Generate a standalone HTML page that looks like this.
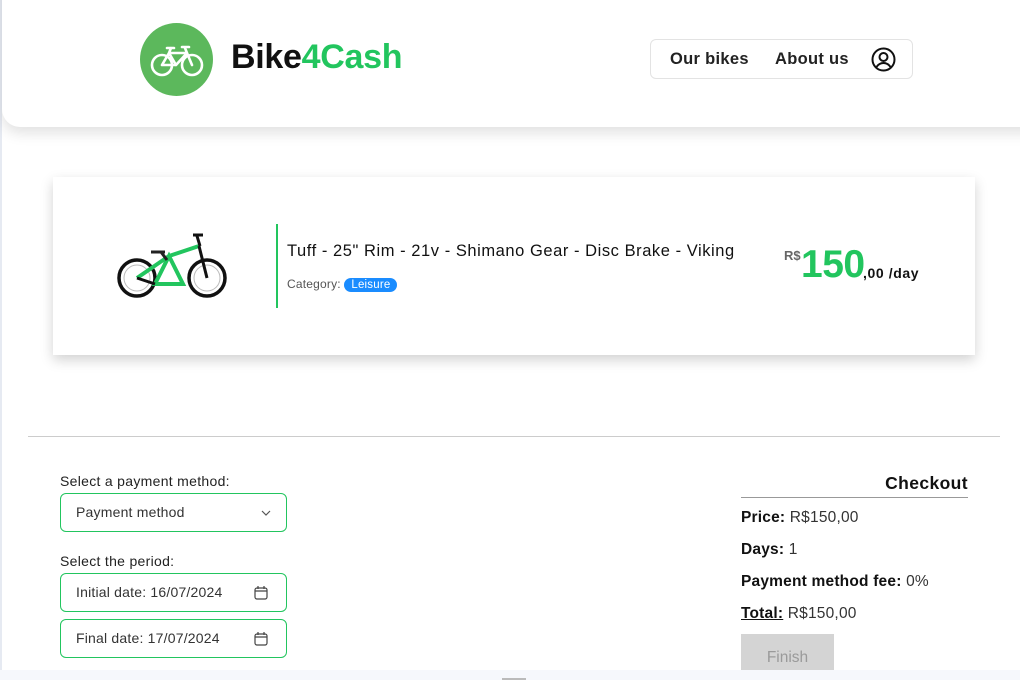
<!DOCTYPE html>
<html><head><meta charset="utf-8"><style>
*{box-sizing:border-box;margin:0;padding:0}
body{width:1020px;height:680px;overflow:hidden;background:#fff;font-family:"Liberation Sans",sans-serif;color:#111;position:relative}
.lb{position:absolute;left:0;top:0;width:2px;height:680px;background:#e6eaf2}
.hdr{position:absolute;left:2px;top:-20px;width:1040px;height:147px;background:#fff;border-radius:0 0 0 18px;box-shadow:0 6px 14px rgba(0,0,0,.12)}
.abs{position:absolute}
.logo{left:140px;top:23px;width:73px;height:73px;border-radius:50%;background:#5cb85c}
.brand{left:231px;top:38px;font-size:34px;font-weight:bold;letter-spacing:-0.3px}
.nav{left:650px;top:39px;width:263px;height:40px;border:1px solid #e3e3e3;border-radius:6px}
.nav span{position:absolute;top:10px;font-size:16.5px;font-weight:bold;color:#222;letter-spacing:0.3px}
.card{left:53px;top:177px;width:922px;height:178px;background:#fff;box-shadow:0 5px 12px rgba(0,0,0,.18)}
.vl{left:276px;top:224px;width:2px;height:84px;background:#22c55e}
.title{left:287px;top:242px;font-size:16.5px;color:#111;letter-spacing:0.55px}
.cat{left:287px;top:277px;font-size:12px;color:#555;letter-spacing:0.2px}
.badge{display:inline-block;background:#1a8cff;color:#fff;border-radius:9px;padding:1px 7px;font-size:11.5px}
.hr{left:28px;top:436px;width:972px;height:1px;background:#ccc}
.lbl{font-size:14px;color:#222;letter-spacing:0.3px}
.inp{width:227px;height:39px;border:1px solid #22c55e;border-radius:6px;font-size:14px;color:#333;padding:10px 15px;letter-spacing:0.2px}
.row{font-size:15.5px;color:#333;letter-spacing:0.2px}
.row b{color:#111}
.btn{left:741px;top:634px;width:93px;height:46px;background:#d4d4d4;color:#9a9a9a;font-size:15.5px;text-align:center;padding-top:15px}
.foot{left:0;top:670px;width:1020px;height:10px;background:#f6f8fc}
</style></head><body>
<div class="lb"></div>
<div class="hdr"></div>
<div class="abs logo"><svg width="73" height="73" viewBox="0 0 73 73" fill="none" stroke="#fff" stroke-width="2.6" stroke-linecap="round" stroke-linejoin="round"><circle cx="22" cy="42" r="10"/><circle cx="52" cy="42" r="10"/><path d="M22 42l7-12h18l5 12M29 30l7 12h-14M47 30l-11 12M27 25h7M31 25l-2 5M45 25l2 5M42 24h7"/></svg></div>
<div class="abs brand">Bike<span style="color:#22c55e">4Cash</span></div>
<div class="abs nav"><span style="left:19px">Our bikes</span><span style="left:124px">About us</span>
<svg style="position:absolute;left:220px;top:7px" width="25" height="25" viewBox="0 0 25 25" fill="none" stroke="#111" stroke-width="2"><circle cx="12.5" cy="12.5" r="11"/><circle cx="12.5" cy="10" r="4"/><path d="M5.5 20c2-3 4.5-4 7-4s5 1 7 4"/></svg></div>
<div class="abs card"></div>
<svg class="abs" style="left:115px;top:230px" width="115" height="70" viewBox="0 0 115 70" fill="none"><circle cx="22" cy="48" r="18" stroke="#111" stroke-width="3.5"/><circle cx="22" cy="48" r="13" stroke="#bbb" stroke-width="1"/><circle cx="92" cy="48" r="18" stroke="#111" stroke-width="3.5"/><circle cx="92" cy="48" r="13" stroke="#bbb" stroke-width="1"/><path d="M22 48L54 26l30-10M54 26l14 28H40z" stroke="#22c55e" stroke-width="4"/><path d="M40 54L22 48M84 16l8 32M82 6l3 10M78 5h10" stroke="#111" stroke-width="3"/><path d="M36 22h14M46 22l6 8" stroke="#222" stroke-width="3"/></svg>
<div class="abs vl"></div>
<div class="abs title">Tuff - 25" Rim - 21v - Shimano Gear - Disc Brake - Viking</div>
<div class="abs cat">Category: <span class="badge">Leisure</span></div>
<div class="abs" style="left:784px;top:248px;font-size:13px;font-weight:bold;color:#666">R$</div>
<div class="abs" style="left:801px;top:243px;font-size:39px;font-weight:bold;color:#22c55e;letter-spacing:-0.5px">150</div>
<div class="abs" style="left:863px;top:265px;font-size:14px;font-weight:bold;color:#111;letter-spacing:0.6px">,00 /day</div>
<div class="abs hr"></div>
<div class="abs lbl" style="left:60px;top:473px">Select a payment method:</div>
<div class="abs inp" style="left:60px;top:493px">Payment method<svg style="position:absolute;left:200px;top:16px" width="10" height="6" viewBox="0 0 10 6" fill="none" stroke="#555" stroke-width="1.2"><path d="M1 1l4 4 4-4"/></svg></div>
<div class="abs lbl" style="left:60px;top:553px">Select the period:</div>
<div class="abs inp" style="left:60px;top:573px">Initial date: 16/07/2024<svg style="position:absolute;left:193px;top:11px" width="14" height="15" viewBox="0 0 14 15" fill="none" stroke="#444" stroke-width="1.2"><rect x="1" y="3" width="12" height="11" rx="2"/><path d="M1 6h12M4 1v3M10 1v3"/></svg></div>
<div class="abs inp" style="left:60px;top:619px">Final date: 17/07/2024<svg style="position:absolute;left:193px;top:11px" width="14" height="15" viewBox="0 0 14 15" fill="none" stroke="#444" stroke-width="1.2"><rect x="1" y="3" width="12" height="11" rx="2"/><path d="M1 6h12M4 1v3M10 1v3"/></svg></div>
<div class="abs" style="left:741px;top:473px;width:227px;text-align:right;font-size:17.5px;font-weight:bold;letter-spacing:0.4px">Checkout</div>
<div class="abs" style="left:741px;top:497px;width:227px;height:1px;background:#999"></div>
<div class="abs row" style="left:741px;top:509px"><b>Price:</b> R$150,00</div>
<div class="abs row" style="left:741px;top:541px"><b>Days:</b> 1</div>
<div class="abs row" style="left:741px;top:573px"><b>Payment method fee:</b> 0%</div>
<div class="abs row" style="left:741px;top:605px"><b style="text-decoration:underline">Total:</b> R$150,00</div>
<div class="abs btn">Finish</div>
<div class="abs foot"></div>
<div class="abs" style="left:502px;top:678px;width:24px;height:2px;background:#bbb"></div>
</body></html>
